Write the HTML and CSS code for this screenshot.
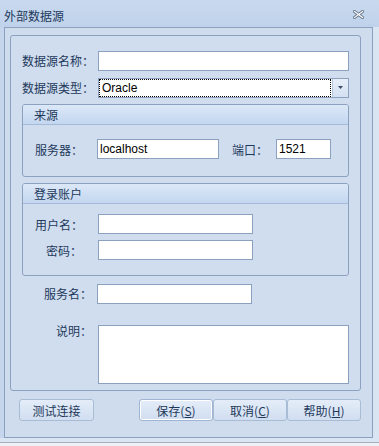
FILE: index.html
```html
<!DOCTYPE html>
<html lang="zh-CN">
<head>
  <meta charset="UTF-8">
  <title>外部数据源</title>
  <link rel="stylesheet" href="styles.css">
</head>
<body>

<div class="window">
  <div class="titlebar">
    <span class="title">外部数据源</span>
    <svg class="close" width="11" height="9" viewBox="0 0 11 9">
      <path d="M1.5 1.5 L9.5 7.5 M9.5 1.5 L1.5 7.5" stroke="#6b7a8e" stroke-width="3" stroke-linecap="square"/>
      <path d="M1.5 1.5 L9.5 7.5 M9.5 1.5 L1.5 7.5" stroke="#ffffff" stroke-width="1.2" stroke-linecap="square"/>
    </svg>
  </div>

  <div class="frame">
    <div class="panel">
      <div class="row">
        <label class="lbl">数据源名称：</label>
        <input class="txt w-full" type="text">
      </div>
      <div class="row row-type">
        <label class="lbl">数据源类型：</label>
        <div class="combo">
          <div class="combo-text"><span class="focus-rect">Oracle</span></div>
          <div class="combo-btn">
            <svg width="7" height="4" viewBox="0 0 7 4"><path d="M1 0 H6 L3.5 3 Z" fill="#3b4d66"/></svg>
          </div>
        </div>
      </div>

      <div class="group group-source">
        <div class="group-head">来源</div>
        <div class="group-body">
          <div class="row">
            <label class="lbl-in">服务器：</label>
            <input class="txt w-host" type="text" value="localhost">
            <label class="lbl-port">端口：</label>
            <input class="txt w-port" type="text" value="1521">
          </div>
        </div>
      </div>

      <div class="group group-login">
        <div class="group-head">登录账户</div>
        <div class="group-body">
          <div class="row">
            <label class="lbl-in">用户名：</label>
            <input class="txt w-mid" type="text">
          </div>
          <div class="row row-pwd">
            <label class="lbl-in">密码：</label>
            <input class="txt w-mid" type="password">
          </div>
        </div>
      </div>

      <div class="row row-service">
        <label class="lbl">服务名：</label>
        <input class="txt w-service" type="text">
      </div>
      <div class="row row-desc">
        <label class="lbl lbl-top">说明：</label>
        <textarea class="txt memo"></textarea>
      </div>
    </div>

    <div class="buttons">
      <button class="btn btn-test">测试连接</button>
      <div class="btn-group">
        <button class="btn btn-default">保存(<u>S</u>)</button>
        <button class="btn">取消(<u>C</u>)</button>
        <button class="btn">帮助(<u>H</u>)</button>
      </div>
    </div>
  </div>

  <div class="under"></div>
</div>

</body>
</html>
```

FILE: styles.css
```css
body {
  margin: 0;
  font-family: "Noto Sans CJK SC", "Liberation Sans", sans-serif;
  font-size: 12px;
  color: #1e395b;
}
.window {
  width: 379px;
  height: 446px;
  overflow: hidden;
  background: linear-gradient(to right, #c5d6ec 0, #c5d6ec 373px, #dae5f4 373px);
}
.titlebar {
  height: 27px;
  display: flex;
  align-items: center;
  justify-content: space-between;
  padding: 0 15px 0 4px;
  background: linear-gradient(#c9daef, #bfd2eb);
}
.title {
  font-size: 12px;
  line-height: 14px;
  color: #1e395b;
  margin-top: 5px;
}
.close {
  margin-top: 2px;
}
.frame {
  box-sizing: border-box;
  width: 369px;
  height: 411px;
  margin-left: 4px;
  padding: 7px 11px 0 5px;
  border: 1px solid #8ba1bf;
  background: #cfdcee;
}
.panel {
  box-sizing: border-box;
  width: 351px;
  padding: 15px 0 6px 11px;
  border: 1px solid #8ba1bf;
  border-radius: 3px;
  background: #d0ddef;
}
.row {
  display: flex;
  align-items: center;
}
.row-type {
  margin-top: 7px;
}
.lbl {
  width: 70px;
  margin-right: 6px;
  text-align: right;
  line-height: 20px;
  white-space: nowrap;
}
.lbl-top {
  align-self: flex-start;
  line-height: 12px;
}
.txt {
  box-sizing: border-box;
  height: 20px;
  margin: 0;
  padding: 0 2px;
  border: 1px solid #8ba1bf;
  background: #fff;
  font-family: "Liberation Sans", sans-serif;
  font-size: 12px;
  color: #000;
  outline: none;
}
.w-full {
  width: 251px;
}
.combo {
  box-sizing: border-box;
  display: flex;
  width: 251px;
  height: 20px;
  border: 1px solid #8ba1bf;
  background: #fff;
}
.combo-text {
  flex: 1;
  padding: 0 1px 0 0;
  display: flex;
}
.focus-rect {
  flex: 1;
  box-sizing: border-box;
  height: 18px;
  padding-left: 2px;
  border: 1px dotted #000;
  font-family: "Liberation Sans", sans-serif;
  font-size: 12px;
  line-height: 16px;
  color: #000;
}
.combo-btn {
  width: 15px;
  border-left: 1px solid #b4c6df;
  background: linear-gradient(#e7eef8, #d3e0f1);
  display: flex;
  align-items: center;
  justify-content: center;
}
.group {
  box-sizing: border-box;
  width: 327px;
  margin-top: 6px;
  border: 1px solid #8ba1bf;
  border-radius: 3px;
  overflow: hidden;
}
.group-head {
  height: 19px;
  padding-left: 11px;
  line-height: 19px;
  border-bottom: 1px solid #a5bbd8;
  background: linear-gradient(#dce8f7, #c3d7f0);
}
.group-body {
  padding-left: 12px;
}
.group-source .group-body {
  height: 51px;
  padding-top: 14px;
  box-sizing: border-box;
}
.group-login .group-body {
  height: 71px;
  padding-top: 10px;
  box-sizing: border-box;
}
.row-pwd {
  margin-top: 6px;
}
.lbl-in {
  width: 47px;
  margin-right: 15px;
  text-align: right;
  white-space: nowrap;
}
.group-login .lbl-in {
  margin-right: 16px;
}
.w-host {
  width: 122px;
}
.lbl-port {
  width: 36px;
  margin: 0 8px 0 13px;
  white-space: nowrap;
}
.w-port {
  width: 55px;
}
.w-mid {
  width: 155px;
}
.row-service {
  margin-top: 8px;
}
.row-service .lbl {
  margin-right: 5px;
}
.w-service {
  width: 155px;
}
.row-desc {
  margin-top: 21px;
}
.memo {
  width: 251px;
  height: 59px;
  resize: none;
}
.buttons {
  display: flex;
  justify-content: space-between;
  margin-top: 8px;
  padding-left: 9px;
}
.btn-group {
  display: flex;
}
.btn {
  box-sizing: border-box;
  width: 74px;
  height: 22px;
  margin: 0;
  padding: 0;
  border: 1px solid #a9bcd6;
  border-radius: 3px;
  background: linear-gradient(#e4edf9, #d1def0);
  font-family: "Noto Sans CJK SC", "Liberation Sans", sans-serif;
  font-size: 12px;
  color: #1e395b;
}
.btn-test {
  width: 75px;
}
.btn-default {
  box-shadow: inset 0 0 0 1px #ffffff;
  border-color: #9fb4d1;
}
.btn u {
  text-underline-offset: 1px;
}
.under {
  height: 9px;
  background: linear-gradient(#dae5f4 0, #dae5f4 4px, #a7aeb8 4px, #a7aeb8 5px, #eef1f5 5px);
}
```
